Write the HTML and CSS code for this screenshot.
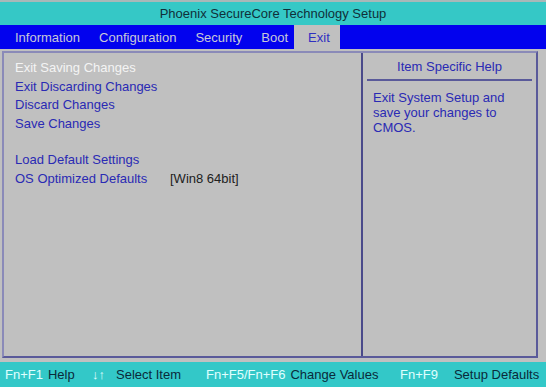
FILE: index.html
```html
<!DOCTYPE html>
<html>

<head>
    <title>Phoenix SecureCore Technology Setup</title>
    <link rel="stylesheet" href="styles.css">
</head>

<body>

<div class="screen">

    <div class="title-bar">Phoenix SecureCore Technology Setup</div>

    <div class="menu-bar">
        <span class="menu-item">Information</span>
        <span class="menu-item">Configuration</span>
        <span class="menu-item">Security</span>
        <span class="menu-item">Boot</span>
        <span class="menu-item active">Exit</span>
    </div> <!-- menu bar -->

    <div class="main">
        <div class="frame">

            <div class="options">
                <div class="option selected">Exit Saving Changes</div>
                <div class="option">Exit Discarding Changes</div>
                <div class="option">Discard Changes</div>
                <div class="option">Save Changes</div>
                <div class="spacer"></div>
                <div class="option">Load Default Settings</div>
                <div class="option with-value">
                    <span class="option-name">OS Optimized Defaults</span>
                    <span class="option-value">[Win8 64bit]</span>
                </div>
            </div> <!-- options -->

            <div class="help">
                <div class="help-title">Item Specific Help</div>
                <div class="help-text">Exit System Setup and save your changes to CMOS.</div>
            </div> <!-- help -->

        </div> <!-- frame -->
    </div> <!-- main -->

    <div class="key-bar">
        <div class="key-group help-key"><span class="key">Fn+F1</span><span class="key-label">Help</span></div>
        <div class="key-group select-key"><span class="key arrows">&#8595;&#8593;</span><span class="key-label">Select Item</span></div>
        <div class="key-group change-key"><span class="key">Fn+F5/Fn+F6</span><span class="key-label">Change Values</span></div>
        <div class="key-group defaults-key"><span class="key">Fn+F9</span><span class="key-label">Setup Defaults</span></div>
    </div> <!-- key bar -->

</div> <!-- screen -->

</body>

</html>
```

FILE: styles.css
```css
body {
    margin: 0;
    background-color: #c0c0c0;
    font-family: Tahoma, "Liberation Sans", Arial, sans-serif;
    font-size: 13px;
}

.screen {
    width: 546px;
    height: 387px;
    display: flex;
    flex-direction: column;
}

.title-bar {
    height: 23px;
    border-top: 2px solid #a8b8b8;
    background-color: #35c8c6;
    color: #10303a;
    text-align: center;
    line-height: 24px;
}

.menu-bar {
    height: 24px;
    background-color: #0202ee;
    display: flex;
    padding-left: 5px;
}

.menu-item {
    color: #c8c8d8;
    padding: 0 9px 0 10px;
    line-height: 25px;
}

.menu-item.active {
    background-color: #c0c0c0;
    color: #3030c0;
    padding: 0 10px 0 14px;
    margin-left: -3px;
}

.main {
    flex: 1;
    padding: 2px 8px 4px 2px;
    display: flex;
}

.frame {
    flex: 1;
    display: flex;
    border: 2px solid #5a5a9a;
    border-top-color: #8a8ab8;
    border-left-color: #8a8ab8;
}

.options {
    width: 359px;
    border-right: 2px solid #4a4a8a;
    padding: 6px 0 0 11px;
    box-sizing: border-box;
}

.option {
    color: #2a2ab4;
    height: 18.5px;
    line-height: 18px;
}

.option.selected {
    color: #f4f4f4;
}

.spacer {
    height: 18px;
}

.with-value {
    display: flex;
}

.option-name {
    width: 155px;
}

.option-value {
    color: #202020;
}

.help {
    flex: 1;
    padding: 0 4px;
}

.help-title {
    color: #2a2ab4;
    text-align: center;
    height: 26px;
    line-height: 28px;
    border-bottom: 2px solid #5a5a9a;
}

.help-text {
    color: #2a2ab4;
    line-height: 15px;
    padding: 9px 16px 0 6px;
}

.key-bar {
    height: 25px;
    background-color: #33c8c8;
    display: flex;
    align-items: center;
    padding-left: 5px;
    white-space: nowrap;
}

.key-group {
    display: flex;
}

.help-key {
    width: 87px;
}

.select-key {
    width: 114px;
}

.change-key {
    width: 194px;
}

.key {
    color: #e0ffff;
    margin-right: 5px;
}

.key-label {
    color: #0a2a3a;
}

.arrows {
    margin-right: 11px;
}

.defaults-key .key {
    margin-right: 16px;
}
```
